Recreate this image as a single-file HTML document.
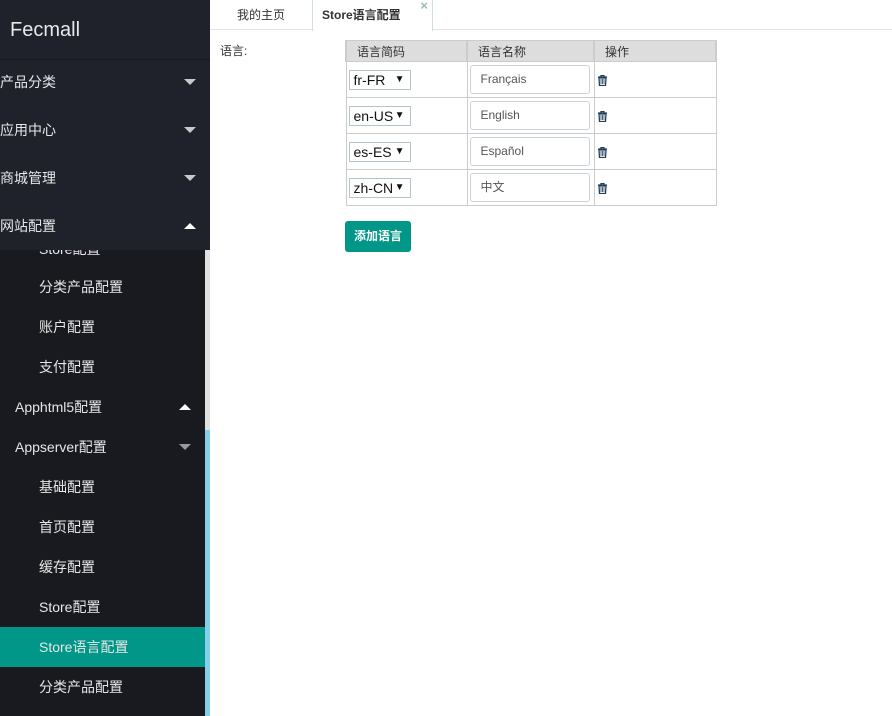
<!DOCTYPE html>
<html><head><meta charset="utf-8"><style>
*{margin:0;padding:0;box-sizing:border-box}
body{width:892px;height:716px;overflow:hidden;background:#fff;font-family:"Liberation Sans","Noto Sans CJK SC",sans-serif;font-size:13px;color:#333;position:relative}
#side{position:absolute;left:0;top:0;width:210px;height:716px;background:#191a20;overflow:hidden}
#top{position:absolute;left:0;top:0;width:210px;height:250px;background:#1f222a;z-index:2}
.logo{position:absolute;left:10px;top:19px;font-size:20px;color:#e8e8e8}
.hr{position:absolute;left:0;top:59px;width:210px;height:1px;background:#171920}
.m{position:absolute;left:0;width:210px;height:48px;line-height:48px;color:#e6e6e6;font-size:14px}
.tri{position:absolute;right:14px;width:0;height:0;border-left:6px solid transparent;border-right:6px solid transparent}
.dn{border-top:6px solid #c8c8c8;top:21px}
.up{border-bottom:6px solid #fff;top:21px}
.s{position:absolute;left:0;width:205px;height:40px;line-height:40px;color:#e6e6e6;font-size:14px;padding-left:39px}
.s2{padding-left:15px}
.sb{position:absolute;left:205px;width:5px}
.tabs{position:absolute;left:210px;top:0;width:682px;height:30px;border-bottom:1px solid #e4e4e4}
.tab{position:absolute;top:0;height:30px;line-height:30px;font-size:12px}
table{position:absolute;left:345px;top:40px;border-collapse:collapse;font-size:12px}
td,th{border:1px solid #ccc;padding:0}
th{background:#ddd;height:21px;font-weight:normal;text-align:left;padding-left:10px;border:2px solid #ccc;border-width:1px 2px}
td{height:36px}
.sel{display:inline-block;margin-left:2px;width:62px;height:20px;border:1px solid #b5c4cb;line-height:18px;padding-left:4px;font-size:14px;position:relative;color:#111}
.sel:after{content:"▼";position:absolute;right:5px;top:0;font-size:10px}
.inp{display:inline-block;margin-left:2px;width:120px;height:29px;border:1px solid #ccd3da;border-radius:3px;line-height:27px;padding-left:10px;color:#555;font-size:12px}
.btn{position:absolute;left:345px;top:221px;width:66px;height:31px;background:#009688;color:#fff;border-radius:3px;font-weight:bold;text-align:center;line-height:31px;font-size:12px}
.tr{margin-left:3px;vertical-align:middle}
</style></head><body>
<div id="side">
<div id="top">
<div class="logo">Fecmall</div><div class="hr"></div>
<div class="m" style="top:58px">产品分类<span class="tri dn"></span></div>
<div class="m" style="top:106px">应用中心<span class="tri dn"></span></div>
<div class="m" style="top:154px">商城管理<span class="tri dn"></span></div>
<div class="m" style="top:202px">网站配置<span class="tri up"></span></div>
</div>
<div class="s" style="top:229px">Store配置</div>
<div class="s" style="top:267px">分类产品配置</div>
<div class="s" style="top:307px">账户配置</div>
<div class="s" style="top:347px">支付配置</div>
<div class="s s2" style="top:387px">Apphtml5配置<span class="tri up" style="top:17px"></span></div>
<div class="s s2" style="top:427px">Appserver配置<span class="tri dn" style="top:17px;border-top-color:#999"></span></div>
<div class="s" style="top:467px">基础配置</div>
<div class="s" style="top:507px">首页配置</div>
<div class="s" style="top:547px">缓存配置</div>
<div class="s" style="top:587px">Store配置</div>
<div class="s" style="top:627px;background:#009688">Store语言配置</div>
<div class="s" style="top:667px">分类产品配置</div>
<div class="sb" style="top:250px;height:180px;background:#e0e0e0"></div>
<div class="sb" style="top:430px;height:286px;background:#87ceeb"></div>
</div>
<div class="tabs">
<div class="tab" style="left:0;width:102px;text-align:center">我的主页</div>
<div class="tab" style="left:102px;width:121px;border-left:1px solid #d0dde2;border-right:1px solid #d0dde2;height:31px;background:#fff;font-weight:bold;padding-left:9px">Store语言配置<span style="position:absolute;right:4px;top:-9px;color:#9bb;font-size:13px">×</span></div>
</div>
<div style="position:absolute;left:220px;top:42px;font-size:12px">语言:</div>
<table>
<tr><th style="width:121px">语言简码</th><th style="width:127px">语言名称</th><th style="width:122px">操作</th></tr>
<tr><td><span class="sel">fr-FR</span></td><td><span class="inp">Français</span></td><td><svg class="tr" width="9" height="11" viewBox="0 0 9 11"><path d="M0 2h9M3 2V0.5h3V2M1 3h7l-0.5 7.5h-6z" fill="none" stroke="#23415a" stroke-width="1.3"/><path d="M3 4v5M4.5 4v5M6 4v5" stroke="#23415a" stroke-width="0.8"/></svg></td></tr>
<tr><td><span class="sel">en-US</span></td><td><span class="inp">English</span></td><td><svg class="tr" width="9" height="11" viewBox="0 0 9 11"><path d="M0 2h9M3 2V0.5h3V2M1 3h7l-0.5 7.5h-6z" fill="none" stroke="#23415a" stroke-width="1.3"/><path d="M3 4v5M4.5 4v5M6 4v5" stroke="#23415a" stroke-width="0.8"/></svg></td></tr>
<tr><td><span class="sel">es-ES</span></td><td><span class="inp">Español</span></td><td><svg class="tr" width="9" height="11" viewBox="0 0 9 11"><path d="M0 2h9M3 2V0.5h3V2M1 3h7l-0.5 7.5h-6z" fill="none" stroke="#23415a" stroke-width="1.3"/><path d="M3 4v5M4.5 4v5M6 4v5" stroke="#23415a" stroke-width="0.8"/></svg></td></tr>
<tr><td><span class="sel">zh-CN</span></td><td><span class="inp">中文</span></td><td><svg class="tr" width="9" height="11" viewBox="0 0 9 11"><path d="M0 2h9M3 2V0.5h3V2M1 3h7l-0.5 7.5h-6z" fill="none" stroke="#23415a" stroke-width="1.3"/><path d="M3 4v5M4.5 4v5M6 4v5" stroke="#23415a" stroke-width="0.8"/></svg></td></tr>
</table>
<div class="btn">添加语言</div>
</body></html>
